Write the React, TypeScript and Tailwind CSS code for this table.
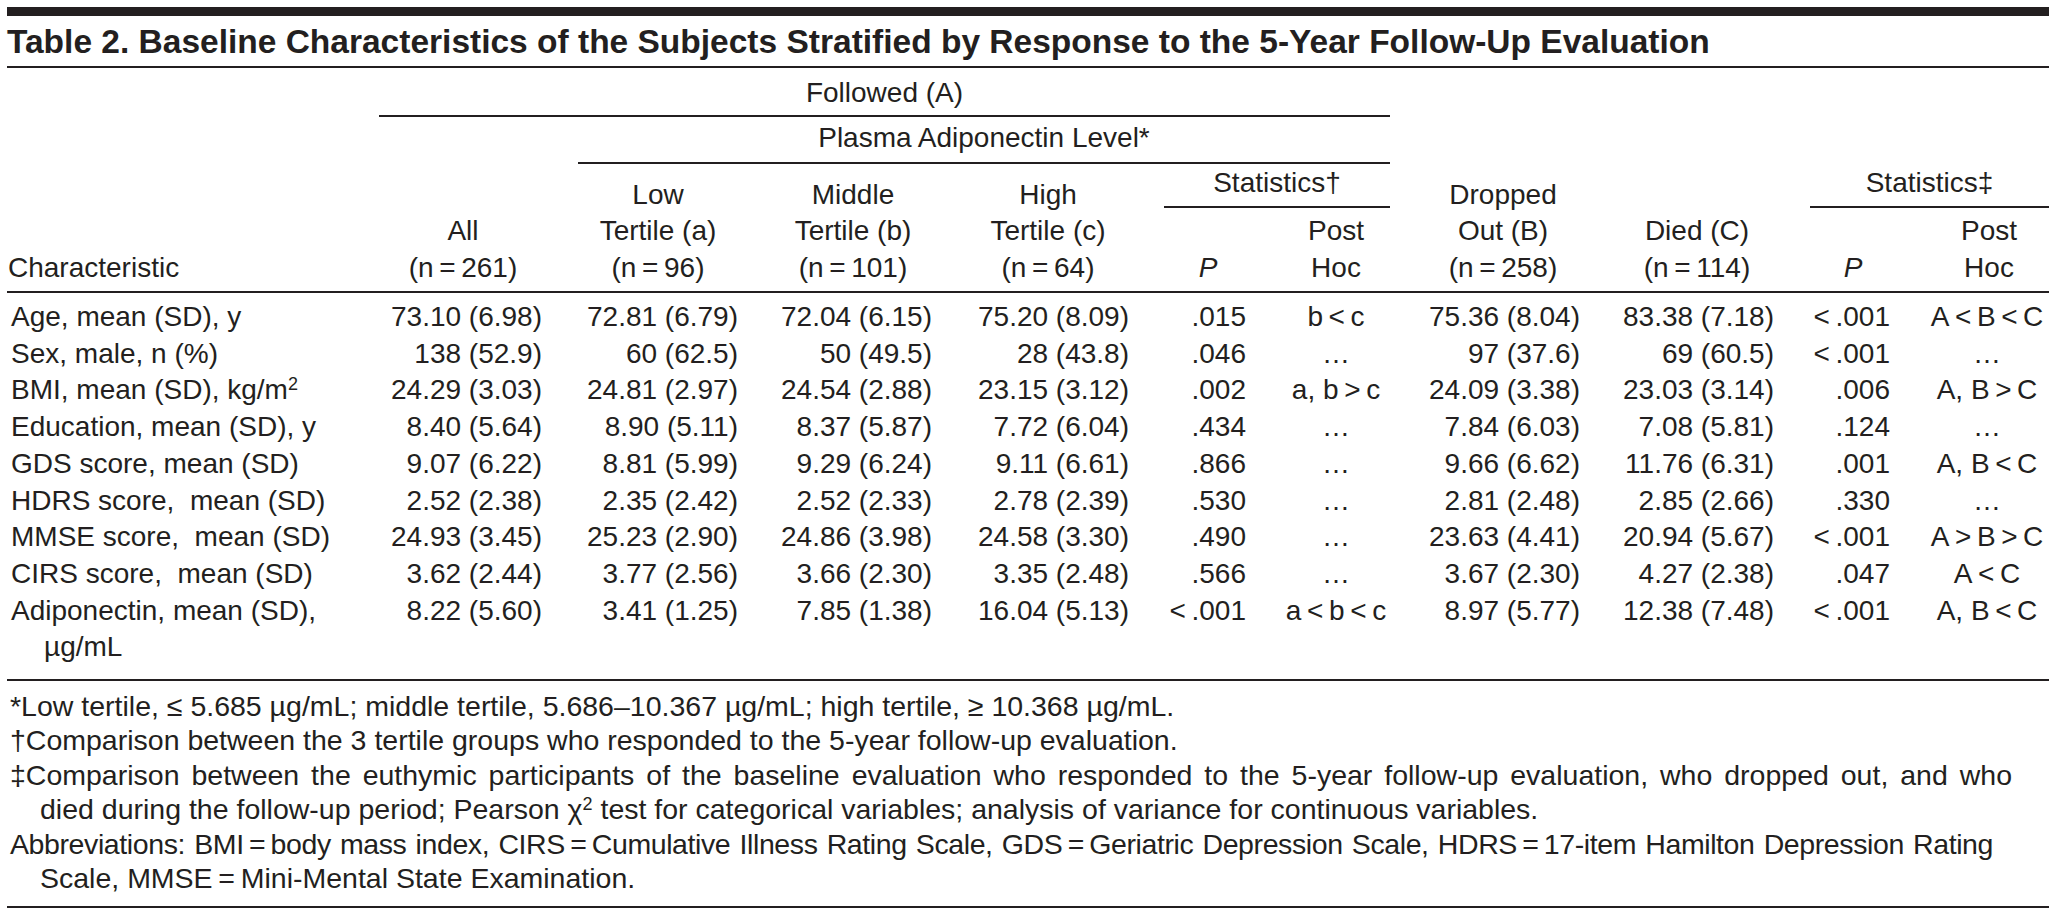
import React from "react";

// thin space used around = and < > like the printed table
const T = "\u2009";

type Row = {
  label: React.ReactNode;
  sub?: string;
  v: string[];
};

const rows: Row[] = [
  { label: "Age, mean (SD), y", v: ["73.10 (6.98)", "72.81 (6.79)", "72.04 (6.15)", "75.20 (8.09)", ".015", `b${T}<${T}c`, "75.36 (8.04)", "83.38 (7.18)", `<${T}.001`, `A${T}<${T}B${T}<${T}C`] },
  { label: "Sex, male, n (%)", v: ["138 (52.9)", "60 (62.5)", "50 (49.5)", "28 (43.8)", ".046", "…", "97 (37.6)", "69 (60.5)", `<${T}.001`, "…"] },
  { label: <>BMI, mean (SD), kg/m<sup className="text-[18px]">2</sup></>, v: ["24.29 (3.03)", "24.81 (2.97)", "24.54 (2.88)", "23.15 (3.12)", ".002", `a, b${T}>${T}c`, "24.09 (3.38)", "23.03 (3.14)", ".006", `A, B${T}>${T}C`] },
  { label: "Education, mean (SD), y", v: ["8.40 (5.64)", "8.90 (5.11)", "8.37 (5.87)", "7.72 (6.04)", ".434", "…", "7.84 (6.03)", "7.08 (5.81)", ".124", "…"] },
  { label: "GDS score, mean (SD)", v: ["9.07 (6.22)", "8.81 (5.99)", "9.29 (6.24)", "9.11 (6.61)", ".866", "…", "9.66 (6.62)", "11.76 (6.31)", ".001", `A, B${T}<${T}C`] },
  { label: "HDRS score,\u00a0 mean (SD)", v: ["2.52 (2.38)", "2.35 (2.42)", "2.52 (2.33)", "2.78 (2.39)", ".530", "…", "2.81 (2.48)", "2.85 (2.66)", ".330", "…"] },
  { label: "MMSE score,\u00a0 mean (SD)", v: ["24.93 (3.45)", "25.23 (2.90)", "24.86 (3.98)", "24.58 (3.30)", ".490", "…", "23.63 (4.41)", "20.94 (5.67)", `<${T}.001`, `A${T}>${T}B${T}>${T}C`] },
  { label: "CIRS score,\u00a0 mean (SD)", v: ["3.62 (2.44)", "3.77 (2.56)", "3.66 (2.30)", "3.35 (2.48)", ".566", "…", "3.67 (2.30)", "4.27 (2.38)", ".047", `A${T}<${T}C`] },
  { label: "Adiponectin, mean (SD),", sub: "µg/mL", v: ["8.22 (5.60)", "3.41 (1.25)", "7.85 (1.38)", "16.04 (5.13)", `<${T}.001`, `a${T}<${T}b${T}<${T}c`, "8.97 (5.77)", "12.38 (7.48)", `<${T}.001`, `A, B${T}<${T}C`] },
];

// per column alignment so numbers sit under the centred headers
const valCls = [
  "text-right pr-[36px]",
  "text-right pr-[18px]",
  "text-right pr-[18px]",
  "text-right pr-[35px]",
  "text-right pr-[24px]",
  "text-center pl-[12px]",
  "text-right pr-[20px]",
  "text-right pr-[36px]",
  "text-right pr-[30px]",
  "text-center pl-[5px]",
];

const cols = "grid grid-cols-[372px_199px_178px_194px_214px_106px_120px_210px_210px_110px_129px]";

const App = () => {
  return (
    <div className="min-h-screen bg-white text-[#231f20] font-['Liberation_Sans',Arial,sans-serif]">
      <div className="ml-[7px] w-[2042px] pt-[7px]">
        {/* heavy top rule */}
        <div className="h-[9px] bg-[#231f20]" />

        {/* title */}
        <div className="pt-[6px] pb-[4px] leading-[40px] text-[33.5px] font-bold border-b-2 border-[#231f20] whitespace-nowrap">
          Table 2. Baseline Characteristics of the Subjects Stratified by Response to the 5-Year Follow-Up Evaluation
        </div>

        <div className="text-[28px]">
          {/* header row 1 */}
          <div className={cols}>
            <div className="col-start-2 col-span-6 text-center pt-[7px] pb-[4px] leading-[36px] border-b-2 border-[#231f20]">
              Followed (A)
            </div>
          </div>
          {/* header row 2 */}
          <div className={cols}>
            <div className="col-start-3 col-span-5 text-center pt-[3px] pb-[6px] leading-[36px] border-b-2 border-[#231f20]">
              Plasma Adiponectin Level*
            </div>
          </div>
          {/* header row 3 */}
          <div className={`${cols} h-[129px] border-b-2 border-[#231f20] leading-[36.5px]`}>
            <div className="flex flex-col justify-end pb-[5px] pl-[1px]">Characteristic</div>
            <div className="flex flex-col justify-end pb-[5px] text-center pr-[31px]">
              <span>All</span>
              <span>(n{T}={T}261)</span>
            </div>
            <div className="flex flex-col justify-end pb-[5px] text-center pr-[18px]">
              <span>Low</span>
              <span>Tertile (a)</span>
              <span>(n{T}={T}96)</span>
            </div>
            <div className="flex flex-col justify-end pb-[5px] text-center">
              <span>Middle</span>
              <span>Tertile (b)</span>
              <span>(n{T}={T}101)</span>
            </div>
            <div className="flex flex-col justify-end pb-[5px] text-center pr-[18px]">
              <span>High</span>
              <span>Tertile (c)</span>
              <span>(n{T}={T}64)</span>
            </div>
            <div className="col-span-2 flex flex-col">
              <div className="text-center pt-[1px] pb-[5px] leading-[36px] border-b-2 border-[#231f20]">Statistics†</div>
              <div className="mt-auto grid grid-cols-[106px_120px] pb-[5px]">
                <div className="flex flex-col justify-end text-center pr-[18px] italic">P</div>
                <div className="flex flex-col text-center pl-[12px]">
                  <span>Post</span>
                  <span>Hoc</span>
                </div>
              </div>
            </div>
            <div className="flex flex-col justify-end pb-[5px] text-center pl-[16px]">
              <span>Dropped</span>
              <span>Out (B)</span>
              <span>(n{T}={T}258)</span>
            </div>
            <div className="flex flex-col justify-end pb-[5px] text-center pr-[16px]">
              <span>Died (C)</span>
              <span>(n{T}={T}114)</span>
            </div>
            <div className="col-span-2 flex flex-col">
              <div className="text-center pt-[1px] pb-[5px] leading-[36px] border-b-2 border-[#231f20]">Statistics‡</div>
              <div className="mt-auto grid grid-cols-[110px_129px] pb-[5px]">
                <div className="flex flex-col justify-end text-center pr-[24px] italic">P</div>
                <div className="flex flex-col text-center pl-[9px]">
                  <span>Post</span>
                  <span>Hoc</span>
                </div>
              </div>
            </div>
          </div>

          {/* body */}
          <div className="pt-[6px] pb-[13px] leading-[36.7px] border-b-2 border-[#231f20]">
            {rows.map((r, i) => (
              <div key={i} className={`${cols} items-start`}>
                <div className="pl-[4px] whitespace-nowrap">
                  <div>{r.label}</div>
                  {r.sub && <div className="pl-[33px]">{r.sub}</div>}
                </div>
                {r.v.map((val, j) => (
                  <div key={j} className={`${valCls[j]} whitespace-nowrap`}>
                    {val}
                  </div>
                ))}
              </div>
            ))}
          </div>
        </div>

        {/* footnotes */}
        <div className="pt-[8px] pb-[11px] pl-[3px] text-[28.5px] leading-[34.4px] border-b-2 border-[#231f20]">
          <div className="whitespace-nowrap">*Low tertile, ≤ 5.685 µg/mL; middle tertile, 5.686–10.367 µg/mL; high tertile, ≥ 10.368 µg/mL.</div>
          <div className="whitespace-nowrap">†Comparison between the 3 tertile groups who responded to the 5-year follow-up evaluation.</div>
          <div className="pr-[37px] text-justify [text-align-last:justify]">
            <span className="inline-block">‡Comparison</span> between the euthymic participants of the baseline evaluation who responded to the 5-year follow-up evaluation, who dropped out, and who
          </div>
          <div className="pl-[30px] whitespace-nowrap">
            died during the follow-up period; Pearson χ<sup className="text-[18px]">2</sup> test for categorical variables; analysis of variance for continuous variables.
          </div>
          <div className="pr-[56px] tracking-[-0.4px] text-justify [text-align-last:justify]">
            Abbreviations: BMI{T}={T}body mass index, CIRS{T}={T}Cumulative Illness Rating Scale, GDS{T}={T}Geriatric Depression Scale, HDRS{T}={T}17-item Hamilton Depression Rating
          </div>
          <div className="pl-[30px] whitespace-nowrap">Scale, MMSE{T}={T}Mini-Mental State Examination.</div>
        </div>
      </div>
    </div>
  );
};

export default App;
